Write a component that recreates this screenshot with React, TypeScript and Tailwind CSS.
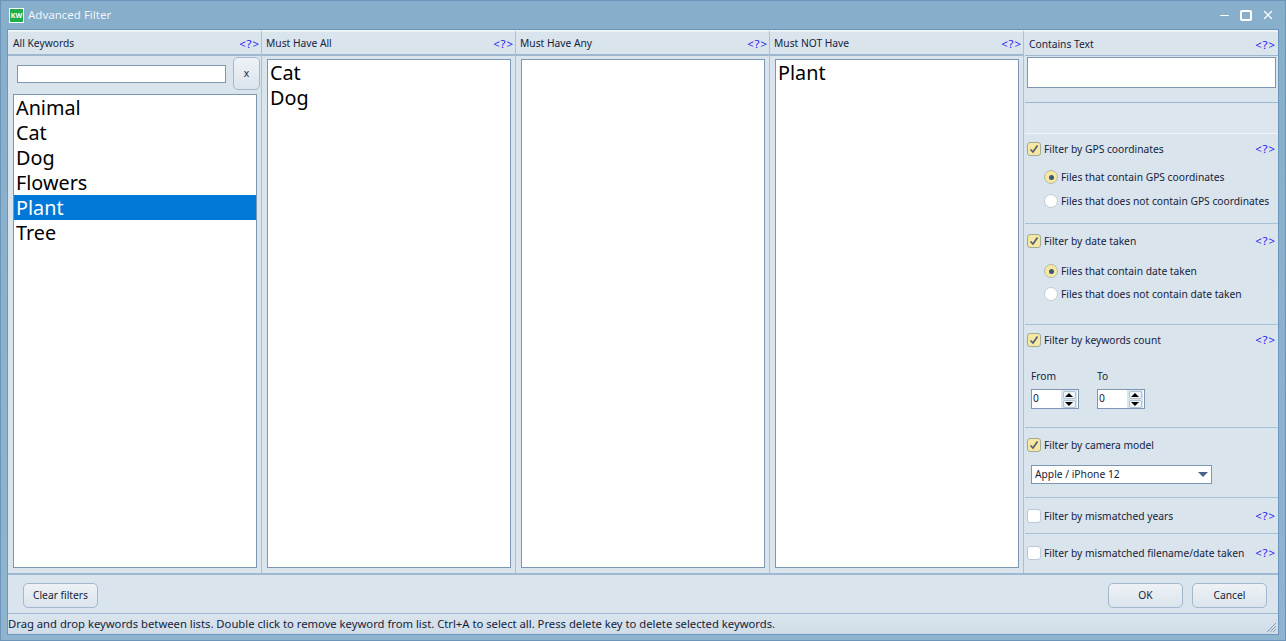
import React from "react";
import { Minus, X } from "lucide-react";

const font = "font-['Noto_Sans','Liberation_Sans',sans-serif]";

const Help = () => <span className="text-[11.5px] text-[#2222f0] tracking-[0.9px]">{"<?>"}</span>;

const ListBox = ({ items }: { items: string[] }) => (
  <div className="bg-white border border-[#7c96b4] overflow-hidden flex-1 min-h-0">
    {items.map((item) => (
      <div
        key={item}
        className={`h-[25px] leading-[25px] px-[2px] text-[19.8px] text-black ${item === "Plant" && items.length > 1 ? "bg-[#0078d7] text-white" : ""}`}
      >
        {item}
      </div>
    ))}
  </div>
);

const Column = ({ title, items }: { title: string; items: string[] }) => (
  <div className="w-[254px] shrink-0 flex flex-col bg-[#dae4ed] border-r border-r-[#a9c1d6] border-t-2 border-t-[#edf2f6]">
    <div className="h-[24px] shrink-0 flex items-center justify-between pl-[4px] pr-[1px] pt-[1px] border-b-2 border-b-[#9db8d0]">
      <span className="text-[10.25px] text-[#14233c]">{title}</span>
      <Help />
    </div>
    <div className="flex-1 flex flex-col min-h-0 pt-[3px] pb-[5px] pl-[5px] pr-[4px]">
      <ListBox items={items} />
    </div>
  </div>
);

const Check = ({ on }: { on: boolean }) => (
  <span
    className={`w-[14px] h-[14px] rounded-[3px] border flex items-center justify-center shrink-0 ${on ? "bg-[#f6e8a3] border-[#a2aa98]" : "bg-white border-[#bdc9d6]"}`}
  >
    {on && (
      <svg width="10" height="10" viewBox="0 0 10 10">
        <path d="M1.5 5.5 L4 8 L8.5 1.5" fill="none" stroke="#4a5f78" strokeWidth="1.7" />
      </svg>
    )}
  </span>
);

const FilterHead = ({ label, on, help = true }: { label: string; on: boolean; help?: boolean }) => (
  <div className="flex items-center justify-between pl-[2px] pr-[2px] h-[16px]">
    <div className="flex items-center gap-[3px]">
      <Check on={on} />
      <span className="mt-[2px] text-[10.25px] text-[#14233c] whitespace-nowrap">{label}</span>
    </div>
    {help && <Help />}
  </div>
);

const Radio = ({ label, on }: { label: string; on: boolean }) => (
  <div className="flex items-center gap-[3px] pl-[19px] h-[16px]">
    <span
      className={`w-[14px] h-[14px] rounded-full border flex items-center justify-center ${on ? "bg-[#f6e8a3] border-[#b4bcb4]" : "bg-white border-[#c0ccd8]"}`}
    >
      {on && <span className="w-[5px] h-[5px] rounded-full bg-[#3f5674]" />}
    </span>
    <span className="mt-[2px] text-[10.25px] text-[#14233c] whitespace-nowrap">{label}</span>
  </div>
);

const Spinner = () => (
  <div className="w-[48px] h-[20px] bg-white border border-[#7c96b4] flex items-center justify-between pl-[1px] pr-[1px]">
    <span className="text-[10.25px] text-[#14233c]">0</span>
    <div className="w-[16px] h-[18px] bg-[#dae4ed] flex flex-col items-center justify-center gap-[1px]">
      <span className="w-[13px] h-[8px] bg-[#f2f5f8] border border-[#b4c3d2] rounded-[2px] flex items-center justify-center">
        <span className="w-0 h-0 border-x-[4px] border-x-transparent border-b-[4px] border-b-black" />
      </span>
      <span className="w-[13px] h-[8px] bg-[#f2f5f8] border border-[#b4c3d2] rounded-[2px] flex items-center justify-center">
        <span className="w-0 h-0 border-x-[4px] border-x-transparent border-t-[4px] border-t-black" />
      </span>
    </div>
  </div>
);

const Btn = ({ label, className = "" }: { label: string; className?: string }) => (
  <button
    className={`h-[25px] pt-[1px] rounded-[5px] border border-[#a3b8cd] bg-gradient-to-b from-[#eef2f6] to-[#dbe4ec] text-[10.25px] text-[#14233c] ${className}`}
  >
    {label}
  </button>
);

export default function App() {
  return (
    <div className={`${font} w-[1286px] h-[641px] overflow-hidden flex flex-col bg-gradient-to-b from-[#87aecb] to-[#8fb4cf] border border-[#6a95b8]`}>
      <div className="h-[28px] shrink-0 flex items-center pl-[8px] pr-[10px]">
        <span className="w-[15px] h-[15px] bg-[#1fae4b] border border-white flex items-center justify-center text-[7px] font-bold text-white leading-none">KW</span>
        <span className="ml-[4px] text-[11.5px] text-[#eef4f8]">Advanced Filter</span>
        <div className="ml-auto flex items-center gap-[9px] text-white">
          <Minus size={13} strokeWidth={2.2} />
          <span className="w-[12px] h-[11px] border-2 border-white rounded-[2px]" />
          <X size={14} strokeWidth={2.2} />
        </div>
      </div>
      <div className="flex-1 min-h-0 mx-[6px] mb-[5px] flex flex-col border border-[#6d97ba] bg-[#dae4ed]">
        <div className="flex-1 min-h-0 flex">
          <div className="w-[254px] shrink-0 flex flex-col bg-[#dae4ed] border-r border-r-[#a9c1d6] border-t-2 border-t-[#edf2f6]">
            <div className="h-[24px] shrink-0 flex items-center justify-between pl-[5px] pr-[1px] pt-[1px] border-b-2 border-b-[#9db8d0]">
              <span className="text-[10.25px] text-[#14233c]">All Keywords</span>
              <Help />
            </div>
            <div className="h-[38px] shrink-0 flex items-center pl-[9px] pr-[1px] pb-[3px] justify-between">
              <div className="w-[209px] h-[18px] bg-white border border-[#7c96b4]" />
              <Btn label="x" className="w-[27px] !h-[33px]" />
            </div>
            <div className="flex-1 flex flex-col min-h-0 pb-[5px] pl-[5px] pr-[4px]">
              <ListBox items={["Animal", "Cat", "Dog", "Flowers", "Plant", "Tree"]} />
            </div>
          </div>
          <Column title="Must Have All" items={["Cat", "Dog"]} />
          <Column title="Must Have Any" items={[]} />
          <Column title="Must NOT Have" items={["Plant"]} />
          <div className="flex-1 min-w-0 flex flex-col pl-[1px] border-t-2 border-t-[#edf2f6]">
            <div className="h-[24px] shrink-0 flex items-center justify-between pl-[4px] pr-[2px] pt-[2px] border-b border-b-[#9db8d0]">
              <span className="text-[10.25px] text-[#14233c]">Contains Text</span>
              <Help />
            </div>
            <div className="h-[47px] shrink-0 pt-[1px] pl-[2px] pr-[2px] border-b border-b-[#9db8d0]">
              <div className="h-[31px] bg-white border border-[#7c96b4]" />
            </div>
            <div className="h-[31px] shrink-0 bg-[#dde6ee] border-b border-b-[#f2f5f8]" />
            <div className="h-[90px] shrink-0 pt-[7px] border-b border-b-[#a9c1d6] flex flex-col">
              <FilterHead label="Filter by GPS coordinates" on />
              <div className="mt-[12px] flex flex-col gap-[8px]">
                <Radio label="Files that contain GPS coordinates" on />
                <Radio label="Files that does not contain GPS coordinates" on={false} />
              </div>
            </div>
            <div className="h-[101px] shrink-0 pt-[9px] border-b border-b-[#a9c1d6] flex flex-col">
              <FilterHead label="Filter by date taken" on />
              <div className="mt-[14px] flex flex-col gap-[7px]">
                <Radio label="Files that contain date taken" on />
                <Radio label="Files that does not contain date taken" on={false} />
              </div>
            </div>
            <div className="h-[103px] shrink-0 pt-[7px] border-b border-b-[#a9c1d6] flex flex-col">
              <FilterHead label="Filter by keywords count" on />
              <div className="mt-[21px] flex gap-[18px] pl-[6px] text-[10.25px] text-[#14233c]">
                <div className="flex flex-col gap-[5px]"><span className="leading-[15px]">From</span><Spinner /></div>
                <div className="flex flex-col gap-[5px]"><span className="leading-[15px]">To</span><Spinner /></div>
              </div>
            </div>
            <div className="h-[70px] shrink-0 pt-[9px] border-b border-b-[#a9c1d6] flex flex-col">
              <FilterHead label="Filter by camera model" on help={false} />
              <div className="mt-[12px] ml-[6px] w-[181px] h-[19px] bg-white border border-[#7c96b4] flex items-center justify-between pl-[3px] pr-[3px]">
                <span className="text-[10.25px] text-[#14233c]">Apple / iPhone 12</span>
                <span className="w-0 h-0 border-x-[5px] border-x-transparent border-t-[5px] border-t-[#4a6488]" />
              </div>
            </div>
            <div className="h-[36px] shrink-0 pt-[10px] border-b border-b-[#a9c1d6]">
              <FilterHead label="Filter by mismatched years" on={false} />
            </div>
            <div className="flex-1 pt-[11px]">
              <FilterHead label="Filter by mismatched filename/date taken" on={false} />
            </div>
          </div>
        </div>
        <div className="h-[41px] shrink-0 border-t-2 border-t-[#9db8d0] border-b border-b-[#9db8d0] flex items-center pt-[2px] pl-[15px] pr-[11px]">
          <Btn label="Clear filters" className="w-[75px]" />
          <Btn label="OK" className="w-[75px] ml-auto" />
          <Btn label="Cancel" className="w-[75px] ml-[9px]" />
        </div>
        <div className="h-[20px] shrink-0 flex items-center pt-[1px] bg-gradient-to-b from-[#dae4ed] to-[#cfdde8] relative">
          <span className="text-[11.26px] text-[#14233c] whitespace-nowrap">Drag and drop keywords between lists. Double click to remove keyword from list. Ctrl+A to select all. Press delete key to delete selected keywords.</span>
          <svg className="absolute right-[1px] bottom-[1px]" width="11" height="11" viewBox="0 0 11 11">
            <path d="M10 1 L1 10 M10 4 L4 10 M10 7 L7 10" stroke="#8a9db0" strokeWidth="1" />
          </svg>
        </div>
      </div>
    </div>
  );
}
